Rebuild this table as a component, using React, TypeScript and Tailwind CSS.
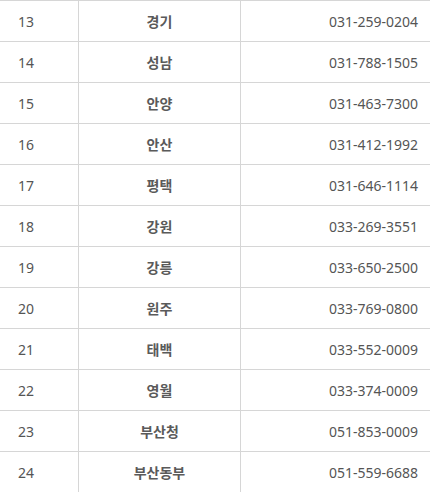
const rows: [string, string, string][] = [
  ["13", "경기", "031-259-0204"],
  ["14", "성남", "031-788-1505"],
  ["15", "안양", "031-463-7300"],
  ["16", "안산", "031-412-1992"],
  ["17", "평택", "031-646-1114"],
  ["18", "강원", "033-269-3551"],
  ["19", "강릉", "033-650-2500"],
  ["20", "원주", "033-769-0800"],
  ["21", "태백", "033-552-0009"],
  ["22", "영월", "033-374-0009"],
  ["23", "부산청", "051-853-0009"],
  ["24", "부산동부", "051-559-6688"],
];

export default function App() {
  return (
    <div
      className="w-[430px] bg-white text-[14px] text-[#555]"
      style={{ fontFamily: '"Noto Sans", "Noto Sans CJK KR", sans-serif' }}
    >
      {rows.map(([no, name, tel]) => (
        <div key={no} className="flex h-[41px] border-t border-[#d6d6d6]">
          <div className="flex w-[78px] items-center pl-[18px]">{no}</div>
          <div className="flex w-[162px] items-center justify-center border-l border-[#d6d6d6] font-semibold text-[#5a5a5a]">
            {name}
          </div>
          <div className="flex flex-1 items-center justify-end border-l border-[#d6d6d6] pr-[12px]">
            {tel}
          </div>
        </div>
      ))}
    </div>
  );
}
